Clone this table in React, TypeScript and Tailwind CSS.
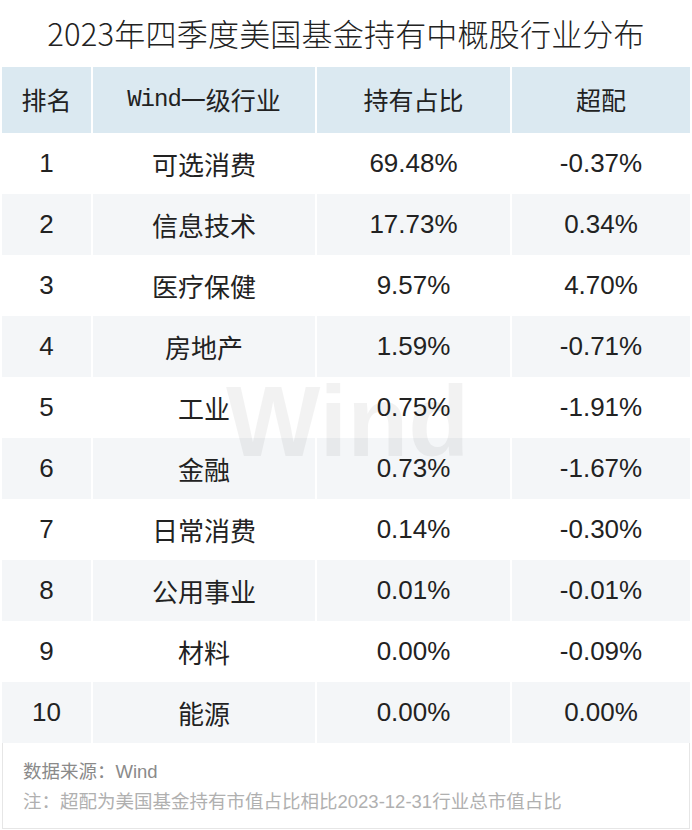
const rows = [
  { rank: '1', name: '可选消费', share: '69.48%', over: '-0.37%' },
  { rank: '2', name: '信息技术', share: '17.73%', over: '0.34%' },
  { rank: '3', name: '医疗保健', share: '9.57%', over: '4.70%' },
  { rank: '4', name: '房地产', share: '1.59%', over: '-0.71%' },
  { rank: '5', name: '工业', share: '0.75%', over: '-1.91%' },
  { rank: '6', name: '金融', share: '0.73%', over: '-1.67%' },
  { rank: '7', name: '日常消费', share: '0.14%', over: '-0.30%' },
  { rank: '8', name: '公用事业', share: '0.01%', over: '-0.01%' },
  { rank: '9', name: '材料', share: '0.00%', over: '-0.09%' },
  { rank: '10', name: '能源', share: '0.00%', over: '0.00%' },
];

const cjk = "font-['Liberation_Sans','Noto_Sans_CJK_SC',sans-serif]";

export default function App() {
  return (
    <div className={`relative w-[692px] h-[830px] bg-white text-[#222] ${cjk}`}>
      <div className="h-[67px] flex items-center justify-center text-[31px] font-light font-['Noto_Sans_CJK_SC',sans-serif] tracking-[0.2px]">
        2023年四季度美国基金持有中概股行业分布
      </div>

      <div className="mx-[2px] w-[688px]">
        <div className="grid grid-cols-[89px_224px_195px_180px] h-[66px] bg-[#dbe9f1] text-[25px]">
          <div className="flex items-center justify-center font-['Noto_Sans_CJK_SC',sans-serif]">排名</div>
          <div className="flex items-center justify-center border-l-2 border-white">
            <span className="font-['Liberation_Mono',monospace] text-[24px] tracking-[-1px]">Wind</span>
            <span className="font-['Noto_Sans_CJK_SC',sans-serif]">一级行业</span>
          </div>
          <div className="flex items-center justify-center border-l-2 border-white font-['Noto_Sans_CJK_SC',sans-serif]">持有占比</div>
          <div className="flex items-center justify-center border-l-2 border-white font-['Noto_Sans_CJK_SC',sans-serif]">超配</div>
        </div>

        {rows.map((r, i) => (
          <div
            key={r.rank}
            className={`grid grid-cols-[89px_224px_195px_180px] h-[61px] text-[26px] ${i % 2 === 1 ? 'bg-[#f4f6f8]' : 'bg-white'}`}
          >
            <div className="flex items-center justify-center">{r.rank}</div>
            <div className="flex items-center justify-center border-l-2 border-white font-['Noto_Sans_CJK_SC',sans-serif]">{r.name}</div>
            <div className="flex items-center justify-center border-l-2 border-white">{r.share}</div>
            <div className="flex items-center justify-center border-l-2 border-white">{r.over}</div>
          </div>
        ))}

        <div className="h-[86px] border border-t-0 border-[#e6e6e6] px-[20px] pt-[14px] text-[18.5px] leading-[30px]">
          <div className="text-[#8a8a8a]">数据来源：Wind</div>
          <div className="text-[#b0b0b0]">注：超配为美国基金持有市值占比相比2023-12-31行业总市值占比</div>
        </div>
      </div>

      {/* watermark over the table */}
      <div className="absolute left-[226px] top-[346px] text-[100px] font-bold font-['Liberation_Sans',sans-serif] text-black/[0.05] pointer-events-none select-none">
        Wind
      </div>
    </div>
  );
}
